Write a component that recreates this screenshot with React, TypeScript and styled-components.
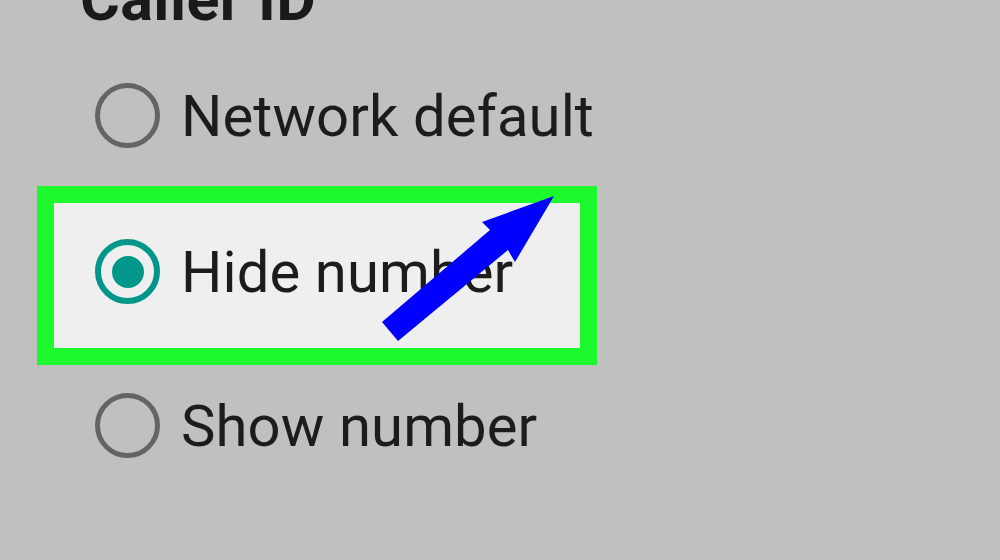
import React from "react";
import styled, { createGlobalStyle, css } from "styled-components";

const Global = createGlobalStyle`
  html, body { margin: 0; padding: 0; }
  body {
    background: #c0c0c0;
    font-family: Roboto, "Liberation Sans", sans-serif;
    overflow: hidden;
  }
`;

const Page = styled.div`
  position: relative;
  width: 1000px;
  height: 560px;
  overflow: hidden;
  background: #c0c0c0;
`;

const Title = styled.h1`
  margin: -31px 0 0 80px;
  font-size: 61px;
  line-height: 61px;
  height: 61px;
  font-weight: 700;
  color: #1a1a1a;
  letter-spacing: 0.4px;
`;

const List = styled.div`
  display: flex;
  flex-direction: column;
  margin-top: 8px;
  padding-left: 54px;
`;

const Row = styled.div<{ $selected?: boolean }>`
  display: flex;
  align-items: center;
  box-sizing: border-box;
  width: 526px;
  height: 155px;
  padding-left: 41px;
  ${(p) =>
    p.$selected &&
    css`
      height: 145px;
      margin-top: 10px;
      padding-bottom: 8px;
      background: #efefef;
      outline: 17px solid #1cf92d;
    `}
`;

const Radio = styled.span<{ $checked?: boolean }>`
  display: flex;
  align-items: center;
  justify-content: center;
  box-sizing: border-box;
  width: 65px;
  height: 65px;
  flex: none;
  border-radius: 50%;
  border: ${(p) => (p.$checked ? "6px solid #00968a" : "5px solid #646464")};
`;

const Dot = styled.span`
  width: 32px;
  height: 32px;
  border-radius: 50%;
  background: #00968a;
`;

const Label = styled.span`
  margin-left: 21px;
  font-size: 58px;
  letter-spacing: 0.1px;
  color: #1c1c1c;
  white-space: nowrap;
`;

const Overlay = styled.svg`
  position: absolute;
  left: 0;
  top: 0;
  pointer-events: none;
`;

const options = [
  { label: "Network default", checked: false },
  { label: "Hide number", checked: true },
  { label: "Show number", checked: false },
];

export default function App() {
  return (
    <Page>
      <Global />
      <Title>Caller ID</Title>
      <List>
        {options.map((o) => (
          <Row key={o.label} $selected={o.checked}>
            <Radio $checked={o.checked}>{o.checked && <Dot />}</Radio>
            <Label>{o.label}</Label>
          </Row>
        ))}
      </List>
      <Overlay width="1000" height="560" viewBox="0 0 1000 560">
        <polygon
          points="382,322 490,230 482,222 554,196 515,262 508,250 398,341"
          fill="#0000ff"
        />
      </Overlay>
    </Page>
  );
}
